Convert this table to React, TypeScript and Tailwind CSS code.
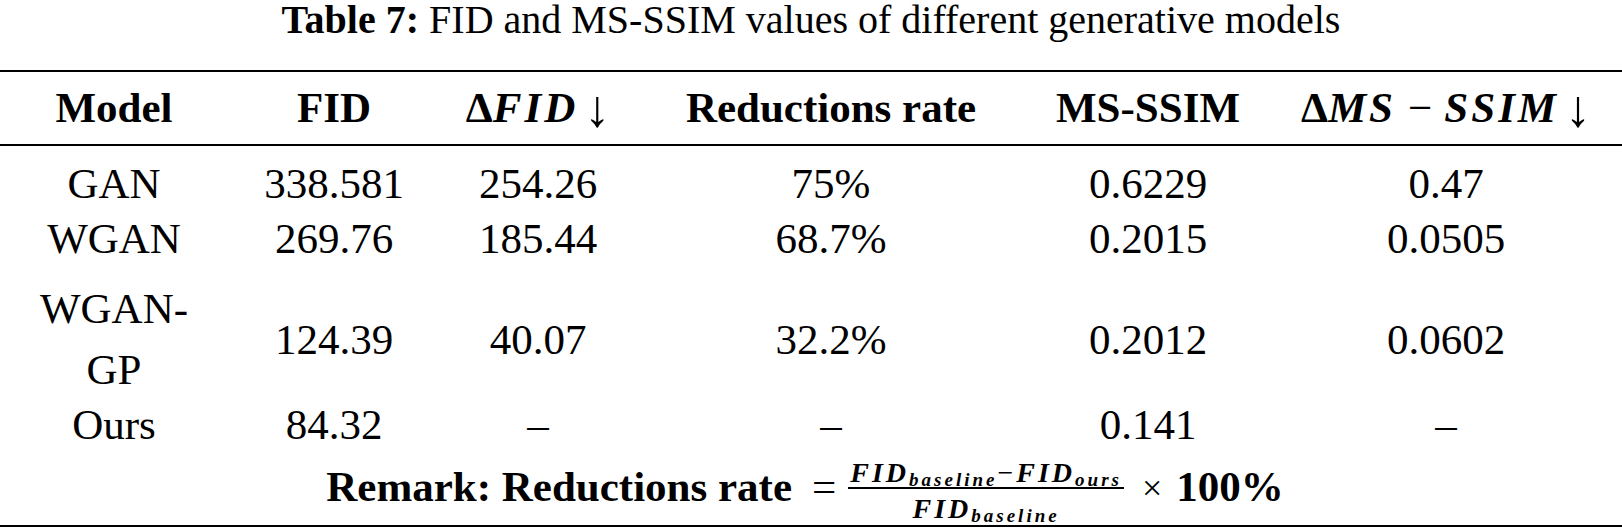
import React from "react";

const cols = "grid grid-cols-[228px_212px_196px_390px_244px_1fr]";

const rows = [
  ["GAN", "338.581", "254.26", "75%", "0.6229", "0.47"],
  ["WGAN", "269.76", "185.44", "68.7%", "0.2015", "0.0505"],
];

function Cell({ children }: { children: React.ReactNode }) {
  return <div className="flex items-center justify-center text-center">{children}</div>;
}

function Arrow() {
  return <span className="ml-[6px] inline-block align-[-4px] text-[52px] leading-[40px] font-normal">↓</span>;
}

export default function App() {
  return (
    <div className="w-full bg-white text-black font-['Liberation_Serif',serif]">
      {/* Caption */}
      <p className="h-[40px] text-center text-[40px] leading-[40px]">
        <span className="font-bold">Table 7:</span> FID and MS-SSIM values of different generative models
      </p>

      {/* Header */}
      <div className={`${cols} mt-[30px] h-[76px] border-t-2 border-b-2 border-black text-[43px] font-bold`}>
        <Cell>Model</Cell>
        <Cell>FID</Cell>
        <Cell>
          <span>
            Δ<i className="tracking-[3px]">FID</i>
            <Arrow />
          </span>
        </Cell>
        <Cell>Reductions rate</Cell>
        <Cell>MS-SSIM</Cell>
        <Cell>
          <span>
            Δ<i className="tracking-[3px]">MS</i>
            <span className="mx-[12px] font-normal">−</span>
            <i className="tracking-[3px]">SSIM</i>
            <Arrow />
          </span>
        </Cell>
      </div>

      {/* Body */}
      <div className="pt-[10px] text-[43px]">
        {rows.map((r) => (
          <div key={r[0]} className={`${cols} h-[55px] leading-[55px]`}>
            {r.map((v, i) => (
              <Cell key={i}>{v}</Cell>
            ))}
          </div>
        ))}
        <div className={`${cols} pt-[12px] leading-[61px]`}>
          <Cell>
            <span>
              WGAN-
              <br />
              GP
            </span>
          </Cell>
          <Cell>124.39</Cell>
          <Cell>40.07</Cell>
          <Cell>32.2%</Cell>
          <Cell>0.2012</Cell>
          <Cell>0.0602</Cell>
        </div>
        <div className={`${cols} h-[50px] leading-[50px]`}>
          <Cell>Ours</Cell>
          <Cell>84.32</Cell>
          <Cell>–</Cell>
          <Cell>–</Cell>
          <Cell>0.141</Cell>
          <Cell>–</Cell>
        </div>

        {/* Remark */}
        <div className="flex h-[77px] items-center justify-center border-b-2 border-black pr-[12px]">
          <span className="font-bold">Remark: Reductions rate</span>
          <span className="ml-[20px] mr-[12px]">=</span>
          <span className="inline-flex flex-col items-center font-bold italic">
            <span className="px-[2px] pt-[6px] text-[28px] leading-[28px] tracking-[3px]">
              FID<sub className="text-[19px] tracking-[3px]">baseline</sub>
              <span className="not-italic font-normal">−</span>
              FID<sub className="text-[19px] tracking-[3px]">ours</sub>
            </span>
            <span className="h-[2px] w-full bg-black" />
            <span className="pt-[6px] text-[28px] leading-[28px] tracking-[3px]">
              FID<sub className="text-[19px] tracking-[3px]">baseline</sub>
            </span>
          </span>
          <span className="ml-[18px] mr-[14px] text-[36px]">×</span>
          <span className="font-bold">100%</span>
        </div>
      </div>
    </div>
  );
}
